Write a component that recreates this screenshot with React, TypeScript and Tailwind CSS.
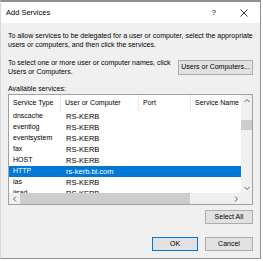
import React from "react";

const ROWS = [
  { type: "dnscache", host: "RS-KERB" },
  { type: "eventlog", host: "RS-KERB" },
  { type: "eventsystem", host: "RS-KERB" },
  { type: "fax", host: "RS-KERB" },
  { type: "HOST", host: "RS-KERB" },
  { type: "HTTP", host: "rs-kerb.bi.com", selected: true },
  { type: "ias", host: "RS-KERB" },
  { type: "iisad", host: "RS-KERB" },
];

const COLS = ["Service Type", "User or Computer", "Port", "Service Name"];
const WIDTHS = ["w-[52px]", "w-[78px]", "w-[52px]", "w-[50px]"];

function Chevron({ dir }: { dir: "up" | "down" | "left" | "right" }) {
  const d = {
    up: "M1.5 5 L4 2.5 L6.5 5",
    down: "M1.5 3 L4 5.5 L6.5 3",
    left: "M5 1.5 L2.5 4 L5 6.5",
    right: "M3 1.5 L5.5 4 L3 6.5",
  }[dir];
  return (
    <svg width="8" height="8" viewBox="0 0 8 8">
      <path d={d} fill="none" stroke="#606060" strokeWidth="1" />
    </svg>
  );
}

function Button({
  label,
  width,
  primary,
}: {
  label: string;
  width: string;
  primary?: boolean;
}) {
  return (
    <button
      className={[
        "flex h-[14px] items-center justify-center bg-[#e1e1e1] text-[7px] text-black",
        width,
        primary ? "border border-[#0078d7]" : "border border-[#adadad]",
      ].join(" ")}
    >
      {label}
    </button>
  );
}

export default function App() {
  return (
    <div className="h-[261px] w-[263px] bg-white font-['Liberation_Sans',Arial,sans-serif] text-black">
      <div className="flex h-[259px] w-[261px] flex-col border border-t-2 border-[#8f8f8f] border-l-[#d8d8d8] bg-[#f0f0f0]">
        {/* title bar */}
        <div className="flex h-[21px] items-center bg-white pl-[5px]">
          <span className="text-[7.5px]">Add Services</span>
          <span className="ml-auto text-[8px]">?</span>
          <svg width="8" height="8" viewBox="0 0 8 8" className="ml-[24px] mr-[12px]">
            <path d="M0.5 0.5 L7.5 7.5 M7.5 0.5 L0.5 7.5" stroke="#202020" strokeWidth="0.9" />
          </svg>
        </div>

        <div className="flex flex-col px-[7px] pt-[8px] text-[7px]">
          <p className="leading-[9px]">
            To allow services to be delegated for a user or computer, select the appropriate
            <br />
            users or computers, and then click the services.
          </p>

          <div className="mt-[9px] flex items-center justify-between">
            <p className="leading-[9px]">
              To select one or more user or computer names, click
              <br />
              Users or Computers.
            </p>
            <button className="flex h-[15px] w-[75px] items-center justify-center border border-[#adadad] bg-[#e1e1e1] text-[7px]">
              Users or Computers...
            </button>
          </div>

          <p className="mt-[8px] leading-[9px]">Available services:</p>

          {/* list view */}
          <div className="mt-[1px] grid h-[111px] w-[245px] grid-cols-[232px_11px] grid-rows-[98px_11px] border border-[#a0a0a0] bg-white">
            <div className="overflow-hidden">
              <div className="flex h-[16px] items-center">
                {COLS.map((c, i) => (
                  <div
                    key={c}
                    className={[
                      "flex h-full items-center pl-[4px]",
                      WIDTHS[i],
                      i < 3 ? "border-r border-[#e5e5e5]" : "",
                    ].join(" ")}
                  >
                    {c}
                  </div>
                ))}
              </div>
              {ROWS.map((r) => (
                <div
                  key={r.type}
                  className={[
                    "flex h-[11px] items-center",
                    r.selected ? "bg-[#0078d7] text-white" : "",
                  ].join(" ")}
                >
                  <div className="w-[52px] pl-[4px]">{r.type}</div>
                  <div className="w-[78px] pl-[5px] text-[7.5px]">{r.host}</div>
                </div>
              ))}
            </div>

            {/* vertical scrollbar */}
            <div className="row-span-1 flex flex-col items-center bg-[#f0f0f0]">
              <div className="flex h-[11px] items-center justify-center">
                <Chevron dir="up" />
              </div>
              <div className="mt-[14px] h-[10px] w-[11px] bg-[#cdcdcd]" />
              <div className="mt-auto flex h-[11px] items-center justify-center">
                <Chevron dir="down" />
              </div>
            </div>

            {/* horizontal scrollbar */}
            <div className="flex items-center bg-[#f0f0f0]">
              <div className="flex w-[11px] items-center justify-center">
                <Chevron dir="left" />
              </div>
              <div className="h-[11px] w-[170px] bg-[#cdcdcd]" />
              <div className="ml-auto flex w-[11px] items-center justify-center">
                <Chevron dir="right" />
              </div>
            </div>
            <div className="bg-[#f0f0f0]" />
          </div>

          <div className="mt-[5px] flex justify-end">
            <Button label="Select All" width="w-[48px]" />
          </div>

          <div className="mt-[13px] flex justify-end gap-[7px]">
            <Button label="OK" width="w-[46px]" primary />
            <Button label="Cancel" width="w-[48px]" />
          </div>
        </div>
      </div>
    </div>
  );
}
